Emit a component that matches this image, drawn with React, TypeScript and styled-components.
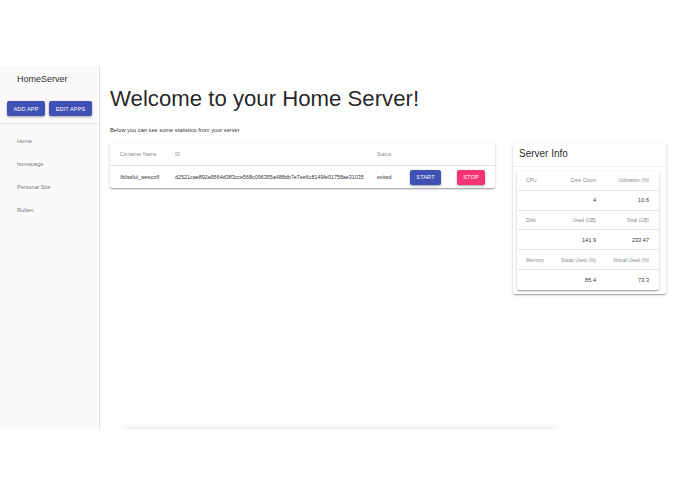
import React from "react";
import styled, { createGlobalStyle } from "styled-components";

const Global = createGlobalStyle`
  html, body { margin: 0; padding: 0; background: #fff; }
  body { font-family: "Liberation Sans", Arial, Helvetica, sans-serif; color: rgba(0,0,0,0.87); }
`;

const Frame = styled.div`
  margin-top: 66px;
  height: 363px;
  display: flex;
  overflow: hidden;
  background: #fff;
`;

const Sidebar = styled.aside`
  width: 99px;
  flex: none;
  background: #fafafa;
  border-right: 1px solid #e0e0e0;
  display: flex;
  flex-direction: column;
`;

const Brand = styled.div`
  font-size: 9px;
  color: rgba(0,0,0,0.87);
  padding: 8px 0 0 17px;
  height: 19px;
`;

const ButtonRow = styled.div`
  display: flex;
  gap: 4px;
  padding: 8px 0 0 7px;
  height: 22px;
  border-bottom: 1px solid #e6e6e6;
`;

const Btn = styled.button<{ $color: string; $w: number }>`
  width: ${(p) => p.$w}px;
  height: 15px;
  border: none;
  border-radius: 2px;
  background: ${(p) => p.$color};
  color: #fff;
  font-family: inherit;
  font-size: 5.6px;
  font-weight: 500;
  letter-spacing: 0.1px;
  text-transform: uppercase;
  padding: 0;
  box-shadow: 0 1px 2px rgba(0,0,0,0.25), 0 1px 3px rgba(0,0,0,0.12);
  display: flex;
  align-items: center;
  justify-content: center;
`;

const Nav = styled.nav`
  display: flex;
  flex-direction: column;
  padding-top: 5px;
`;

const NavItem = styled.div`
  height: 23px;
  display: flex;
  align-items: center;
  padding-left: 17px;
  font-size: 5.6px;
  color: rgba(0,0,0,0.6);
`;

const Main = styled.main`
  flex: 1;
  display: flex;
  padding-left: 10px;
  position: relative;
`;

const Content = styled.div`
  width: 385px;
  display: flex;
  flex-direction: column;
`;

const Title = styled.h1`
  margin: 20px 0 0 0;
  font-size: 22.2px;
  font-weight: 400;
  line-height: 26px;
  color: rgba(0,0,0,0.87);
`;

const Subtitle = styled.p`
  margin: 14px 0 0 0;
  font-size: 5.7px;
  line-height: 8px;
  color: rgba(0,0,0,0.87);
`;

const Card = styled.div`
  background: #fff;
  border-radius: 2px;
  box-shadow: 0 1px 3px rgba(0,0,0,0.2), 0 1px 1px rgba(0,0,0,0.14), 0 2px 1px -1px rgba(0,0,0,0.12);
`;

const TableCard = styled(Card)`
  margin-top: 9px;
  width: 385px;
`;

const ContainerRow = styled.div<{ $head?: boolean }>`
  display: grid;
  grid-template-columns: 55px 202px 33px 47px auto;
  align-items: center;
  height: ${(p) => (p.$head ? 23 : 22)}px;
  padding-left: 10px;
  font-size: ${(p) => (p.$head ? 5 : 5.4)}px;
  color: ${(p) => (p.$head ? "rgba(0,0,0,0.54)" : "rgba(0,0,0,0.87)")};
  border-bottom: ${(p) => (p.$head ? "1px solid #e0e0e0" : "none")};
  box-sizing: border-box;
`;

const Cell = styled.div`
  white-space: nowrap;
`;

const Side = styled.div`
  margin-left: 18px;
  margin-top: 77px;
`;

const InfoCard = styled(Card)`
  width: 153px;
  padding-bottom: 4px;
`;

const InfoTitle = styled.div`
  font-size: 10px;
  padding: 5px 0 0 6px;
  height: 18px;
  border-bottom: 1px solid #eeeeee;
  color: rgba(0,0,0,0.87);
`;

const InnerCard = styled(Card)`
  margin: 4px 7px 0 4px;
`;

const InfoRow = styled.div<{ $head?: boolean; $last?: boolean }>`
  display: grid;
  grid-template-columns: 30px 40px 1fr;
  align-items: center;
  height: 19.8px;
  padding: 0 10px 0 9px;
  font-size: ${(p) => (p.$head ? 5 : 5.6)}px;
  color: ${(p) => (p.$head ? "rgba(0,0,0,0.54)" : "rgba(0,0,0,0.87)")};
  border-bottom: ${(p) => (p.$last ? "none" : "1px solid #e6e6e6")};
  box-sizing: border-box;
`;

const NumCell = styled.div`
  text-align: right;
  white-space: nowrap;
`;

const GhostCard = styled(Card)`
  position: absolute;
  left: 26px;
  top: 366px;
  width: 430px;
  height: 40px;
  box-shadow: 0 0 10px 3px rgba(0,0,0,0.12);
`;

const groups = [
  { a: "CPU", b: "Core Count", c: "Utilization (%)", v1: "4", v2: "10.6" },
  { a: "Disk", b: "Used (GB)", c: "Total (GB)", v1: "141.9", v2: "233.47" },
  { a: "Memory", b: "Swap Used (%)", c: "Virtual Used (%)", v1: "85.4", v2: "73.3" },
];

export default function App() {
  return (
    <>
      <Global />
      <Frame>
        <Sidebar>
          <Brand>HomeServer</Brand>
          <ButtonRow>
            <Btn $color="#3f51b5" $w={38}>Add App</Btn>
            <Btn $color="#3f51b5" $w={43}>Edit Apps</Btn>
          </ButtonRow>
          <Nav>
            <NavItem>Home</NavItem>
            <NavItem>homepage</NavItem>
            <NavItem>Personal Site</NavItem>
            <NavItem>Ruben</NavItem>
          </Nav>
        </Sidebar>
        <Main>
          <Content>
            <Title>Welcome to your Home Server!</Title>
            <Subtitle>Below you can see some statistics from your server</Subtitle>
            <TableCard>
              <ContainerRow $head>
                <Cell>Container Name</Cell>
                <Cell>ID</Cell>
                <Cell>Status</Cell>
                <Cell />
                <Cell />
              </ContainerRow>
              <ContainerRow>
                <Cell>/blissful_wescoff</Cell>
                <Cell>d2521cae892a9564d383cce568c096355a488db7e7ee6c8149fe01758ae31035</Cell>
                <Cell>exited</Cell>
                <Cell>
                  <Btn $color="#3f51b5" $w={31}>Start</Btn>
                </Cell>
                <Cell>
                  <Btn $color="#f73378" $w={28}>Stop</Btn>
                </Cell>
              </ContainerRow>
            </TableCard>
          </Content>
          <Side>
            <InfoCard>
              <InfoTitle>Server Info</InfoTitle>
              <InnerCard>
                {groups.map((g, i) => (
                  <React.Fragment key={g.a}>
                    <InfoRow $head>
                      <Cell>{g.a}</Cell>
                      <NumCell>{g.b}</NumCell>
                      <NumCell>{g.c}</NumCell>
                    </InfoRow>
                    <InfoRow $last={i === groups.length - 1}>
                      <Cell />
                      <NumCell>{g.v1}</NumCell>
                      <NumCell>{g.v2}</NumCell>
                    </InfoRow>
                  </React.Fragment>
                ))}
              </InnerCard>
            </InfoCard>
          </Side>
          <GhostCard />
        </Main>
      </Frame>
    </>
  );
}
